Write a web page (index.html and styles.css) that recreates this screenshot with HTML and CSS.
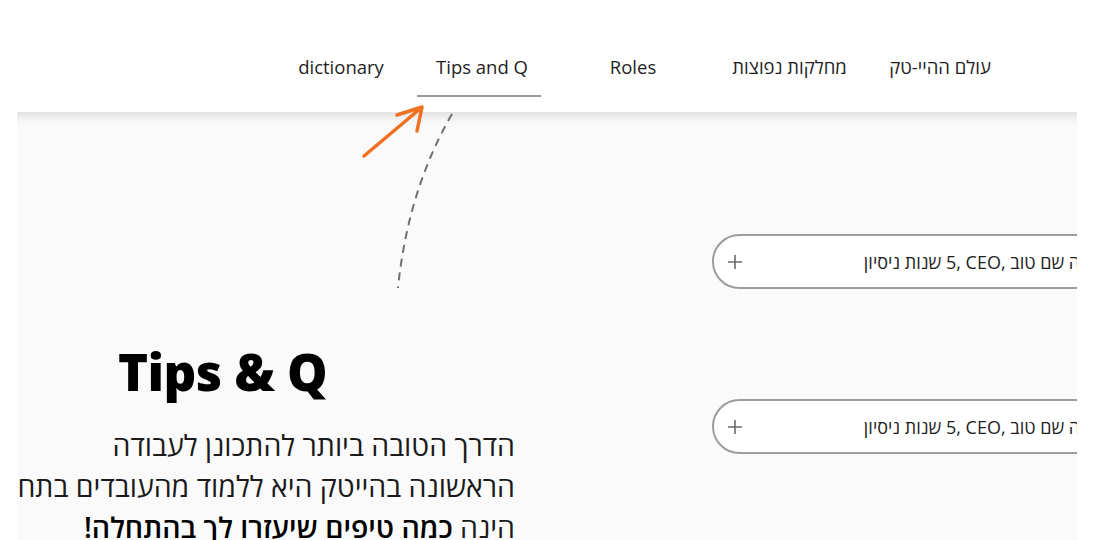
FILE: index.html
```html
<!DOCTYPE html>
<html lang="he">
<head>
<meta charset="utf-8">
<title>Tips and Q</title>
<link rel="stylesheet" href="styles.css">
</head>
<body>
<div class="page">
  <nav class="nav">
    <a class="nav-item first">dictionary</a>
    <a class="nav-item active">Tips and Q</a>
    <a class="nav-item">Roles</a>
    <a class="nav-item he">מחלקות נפוצות</a>
    <a class="nav-item he">עולם ההיי-טק</a>
  </nav>
  <main class="panel">
    <section class="intro">
      <h1 class="title">Tips &amp; Q</h1>
      <p class="lead">הדרך הטובה ביותר להתכונן לעבודה<br>הראשונה בהייטק היא ללמוד מהעובדים בתחום!<br>הינה <b>כמה טיפים שיעזרו לך בהתחלה!</b></p>
    </section>
    <section class="list">
      <div class="pill">
        <span class="pill-text">משה שם טוב ,CEO ,&rlm;5 שנות ניסיון</span>
        <svg class="plus" width="16" height="16" viewBox="0 0 16 16"><path d="M8 1v14M1 8h14" stroke="#6b6b6b" stroke-width="1.6" fill="none"/></svg>
      </div>
      <div class="pill">
        <span class="pill-text">משה שם טוב ,CEO ,&rlm;5 שנות ניסיון</span>
        <svg class="plus" width="16" height="16" viewBox="0 0 16 16"><path d="M8 1v14M1 8h14" stroke="#6b6b6b" stroke-width="1.6" fill="none"/></svg>
      </div>
    </section>
  </main>
  <svg class="annot" width="1108" height="540" viewBox="0 0 1108 540">
    <path d="M452 114 Q408 190 398 288" fill="none" stroke="#707070" stroke-width="2" stroke-dasharray="8 6"/>
    <path d="M364 156 L421 108 M397 115 L422 107 L417 131" fill="none" stroke="#f07022" stroke-width="3.5" stroke-linecap="round" stroke-linejoin="round"/>
  </svg>
</div>
</body>
</html>
```
FILE: styles.css
```css
html, body {
  margin: 0;
  padding: 0;
  background: #ffffff;
}
body {
  font-family: "Open Sans", "DejaVu Sans", sans-serif;
  color: #1a1a1a;
  overflow: hidden;
}
.page {
  position: relative;
  width: 1108px;
  height: 540px;
  overflow: hidden;
}
.nav {
  height: 112px;
  display: grid;
  grid-template-columns: 146px 124px 184px 129px 172px;
  align-items: start;
  padding-left: 271px;
  box-sizing: border-box;
}
.nav-item {
  display: flex;
  align-items: flex-end;
  justify-content: center;
  height: 97px;
  padding-bottom: 15px;
  box-sizing: border-box;
  border-bottom: 2px solid transparent;
  font-size: 18.5px;
  line-height: 26px;
  color: #1e1e1e;
  white-space: nowrap;
}
.nav-item.first { padding-right: 6px; }
.nav-item.active {
  border-bottom-color: #9a9a9a;
  padding-left: 6px;
}
.nav-item.he { direction: rtl; }
.panel {
  margin: 0 31px 0 17px;
  height: 428px;
  background: linear-gradient(#e2e2e2 0, #f4f4f4 8px, #fafafa 14px, #fafafa 100%);
  display: flex;
  overflow: hidden;
}
.intro {
  width: 498px;
  flex: none;
  display: flex;
  flex-direction: column;
  align-items: flex-end;
  padding-top: 224px;
  box-sizing: border-box;
}
.title {
  align-self: flex-start;
  margin: 0 0 0 101px;
  font-family: "Open Sans", sans-serif;
  font-weight: 800;
  font-size: 51px;
  line-height: 70px;
  letter-spacing: -0.6px;
  color: #000;
}
.lead {
  margin: 19px 0 0 0;
  direction: rtl;
  text-align: right;
  white-space: nowrap;
  font-size: 28.5px;
  line-height: 41px;
  color: #1a1a1a;
}
.lead b { font-weight: 600; color: #000; }
.list {
  flex: none;
  margin-left: 197px;
  padding-top: 122px;
  display: flex;
  flex-direction: column;
  gap: 110px;
}
.pill {
  width: 430px;
  height: 55px;
  box-sizing: border-box;
  border: 2px solid #9c9c9c;
  border-radius: 28px;
  background: #fff;
  display: flex;
  align-items: center;
  justify-content: space-between;
  flex-direction: row-reverse;
  padding: 0 36px 0 13px;
}
.pill-text {
  direction: rtl;
  font-size: 18px;
  color: #1e1e1e;
  white-space: nowrap;
}
.plus { flex: none; }
.annot {
  position: absolute;
  left: 0;
  top: 0;
  pointer-events: none;
}
```
